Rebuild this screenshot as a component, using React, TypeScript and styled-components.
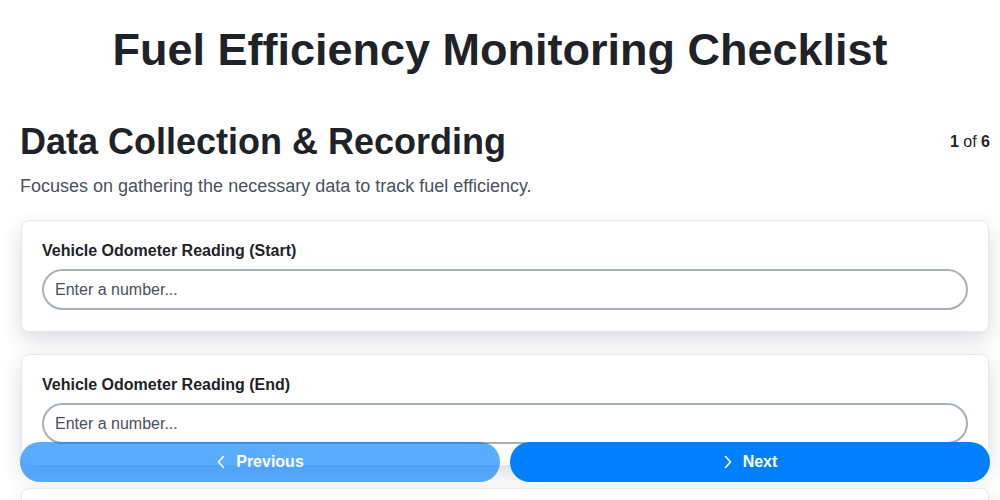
import styled, { createGlobalStyle } from "styled-components";

const GlobalStyle = createGlobalStyle`
  body {
    margin: 0;
    background: #ffffff;
    font-family: "Liberation Sans", Arial, sans-serif;
    color: #1f2328;
  }
`;

const Page = styled.div`
  padding: 0 10px 120px 20px;
`;

const Title = styled.h1`
  margin: 0 0 0 -10px;
  padding-top: 25px;
  height: 75px;
  text-align: center;
  font-size: 45px;
  font-weight: 700;
  line-height: 50px;
  color: #1f2328;
`;

const SectionHead = styled.div`
  display: flex;
  justify-content: space-between;
  align-items: flex-start;
  margin-top: 20px;
`;

const SectionTitle = styled.h2`
  margin: 0;
  font-size: 36px;
  font-weight: 700;
  line-height: 44px;
`;

const Counter = styled.div`
  font-size: 16px;
  line-height: 20px;
  margin-top: 12px;
  color: #1f2328;

  b {
    font-weight: 700;
  }
`;

const Description = styled.p`
  margin: 11px 0 23px;
  font-size: 18px;
  line-height: 22px;
  color: #4a5160;
`;

const Card = styled.div`
  margin: 0 1px 22px 1px;
  padding: 21px 20px 21px;
  background: #fff;
  border: 1px solid #e6e8ec;
  border-radius: 8px;
  box-shadow: 0 8px 20px rgba(30, 40, 60, 0.16);
`;

const Label = styled.label`
  display: block;
  font-size: 16px;
  font-weight: 700;
  line-height: 18px;
  margin-bottom: 9px;
  color: #1f2328;
`;

const Input = styled.input`
  box-sizing: border-box;
  width: 100%;
  height: 41px;
  padding: 0 11px;
  border: 2px solid #a7b0ba;
  border-radius: 21px;
  font-family: "Liberation Sans", Arial, sans-serif;
  font-size: 16px;
  color: #1f2328;
  background: #fff;
  outline: none;

  &::placeholder {
    color: #4a5160;
  }
`;

const NavBar = styled.div`
  position: fixed;
  left: 20px;
  right: 10px;
  bottom: 18px;
  display: grid;
  grid-template-columns: 1fr 1fr;
  gap: 10px;
`;

const NavButton = styled.button<{ $disabled?: boolean }>`
  height: 40px;
  border: none;
  border-radius: 20px;
  background: #0080ff;
  color: #fff;
  font-family: "Liberation Sans", Arial, sans-serif;
  font-size: 16px;
  font-weight: 700;
  display: flex;
  align-items: center;
  justify-content: center;
  gap: 10px;
  opacity: ${(p) => (p.$disabled ? 0.65 : 1)};
  cursor: ${(p) => (p.$disabled ? "not-allowed" : "pointer")};
`;

const Chevron = ({ dir }: { dir: "left" | "right" }) => (
  <svg width="10" height="14" viewBox="0 0 10 14" fill="none">
    <path
      d={dir === "left" ? "M7.5 1.5 L2.5 7 L7.5 12.5" : "M2.5 1.5 L7.5 7 L2.5 12.5"}
      stroke="#fff"
      strokeWidth="1.6"
      strokeLinecap="round"
      strokeLinejoin="round"
    />
  </svg>
);

const fields = [
  "Vehicle Odometer Reading (Start)",
  "Vehicle Odometer Reading (End)",
  "Fuel Quantity Added",
];

export default function App() {
  return (
    <>
      <GlobalStyle />
      <Page>
        <Title>Fuel Efficiency Monitoring Checklist</Title>
        <SectionHead>
          <SectionTitle>Data Collection &amp; Recording</SectionTitle>
          <Counter>
            <b>1</b> of <b>6</b>
          </Counter>
        </SectionHead>
        <Description>
          Focuses on gathering the necessary data to track fuel efficiency.
        </Description>
        {fields.map((f) => (
          <Card key={f}>
            <Label>{f}</Label>
            <Input type="number" placeholder="Enter a number..." />
          </Card>
        ))}
      </Page>
      <NavBar>
        <NavButton $disabled disabled>
          <Chevron dir="left" />
          Previous
        </NavButton>
        <NavButton>
          <Chevron dir="right" />
          Next
        </NavButton>
      </NavBar>
    </>
  );
}
